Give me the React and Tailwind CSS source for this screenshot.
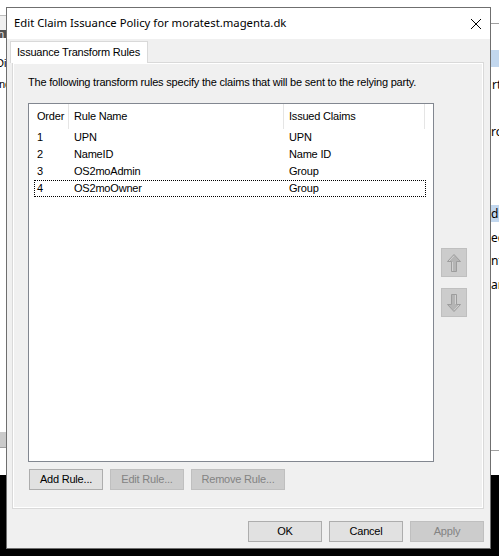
import React from 'react';

// ─── Data ─────────────────────────────────────────────────────────────────────

const rules = [
    { order: 1, name: 'UPN', claims: 'UPN' },
    { order: 2, name: 'NameID', claims: 'Name ID' },
    { order: 3, name: 'OS2moAdmin', claims: 'Group' },
    { order: 4, name: 'OS2moOwner', claims: 'Group', focused: true },
];

const ui = "font-['Liberation_Sans',Arial,sans-serif]";

// ─── Helpers ──────────────────────────────────────────────────────────────────

const WinButton = ({ children, disabled, className = '' }) => (
    <button
        className={`h-[21px] border text-[11px] leading-none tracking-[-0.2px] flex items-center justify-center ${
            disabled
                ? 'bg-[#cccccc] border-[#bfbfbf] text-[#838383]'
                : 'bg-[#e1e1e1] border-[#adadad] text-black'
        } ${className}`}
    >
        {children}
    </button>
);

const ArrowButton = ({ down }) => (
    <div className="w-[26px] h-[29px] bg-[#cccccc] border border-[#bfbfbf] flex items-center justify-center">
        <svg width="14" height="18" viewBox="0 0 14 18" className={down ? 'rotate-180' : ''}>
            <path
                d="M7 0.5 L13.5 7.5 L9.5 7.5 L9.5 17.5 L4.5 17.5 L4.5 7.5 L0.5 7.5 Z"
                fill="#b5b5b5"
                stroke="#9d9d9d"
                strokeWidth="1"
            />
            <path d="M5.5 8 L5.5 17 M2 7 L7 1.8" stroke="#d2d2d2" strokeWidth="1" fill="none" />
        </svg>
    </div>
);

// ─── Background window (pieces visible around the dialog) ─────────────────────

const LeftStrip = () => (
    <div className={`w-[6px] flex flex-col overflow-hidden text-[11px] leading-none ${ui}`}>
        <div className="h-[15px] bg-white" />
        <div className="h-[1px] bg-[#bdbdbd]" />
        <div className="h-[14px] bg-[#f0f0f0]" />
        <div className="h-[8px] bg-[#4f4f4f] text-[#e8e8e8] flex items-center whitespace-nowrap">
            <span className="-ml-[2px]">n</span>
        </div>
        <div className="h-[20px] bg-white" />
        <div className="h-[10px] bg-white whitespace-nowrap flex items-center">
            <span className="-ml-[4px]">Di</span>
        </div>
        <div className="h-[12px] bg-white" />
        <div className="h-[9px] bg-white whitespace-nowrap flex items-center">
            <span className="-ml-[1px]">nd</span>
        </div>
        <div className="flex-1 bg-white" />
        <div className="h-[15px] bg-[#cacaca]" />
        <div className="h-[1px] bg-[#9f9f9f]" />
        <div className="h-[27px] bg-white" />
    </div>
);

const RightStrip = () => (
    <div className="w-[8px] flex flex-col overflow-hidden text-[12px] leading-none whitespace-nowrap font-['Noto_Sans',sans-serif]">
        <div className="h-[23px] bg-white" />
        <div className="h-[1px] bg-[#a0a0a0]" />
        <div className="h-[26px] bg-white" />
        <div className="h-[17px] bg-[#c2d7ee]" />
        <div className="h-[9px] bg-white" />
        <div className="h-[17px] bg-white flex items-center pl-[1px]">rt</div>
        <div className="h-[30px] bg-white" />
        <div className="h-[17px] bg-white flex items-center">ro</div>
        <div className="h-[65px] bg-white" />
        <div className="h-[17px] bg-[#c2d7ee] flex items-center">dk</div>
        <div className="h-[7px] bg-white" />
        <div className="h-[17px] bg-white flex items-center">ed</div>
        <div className="h-[6px] bg-white" />
        <div className="h-[17px] bg-white flex items-center">nt</div>
        <div className="h-[7px] bg-white" />
        <div className="h-[17px] bg-white flex items-center">ar</div>
        <div className="flex-1 bg-white" />
        <div className="h-[1px] bg-[#a0a0a0]" />
        <div className="h-[24px] bg-white" />
    </div>
);

// ─── Componente Principal ─────────────────────────────────────────────────────

const App = () => {
    return (
        <div className="relative w-[499px] h-[556px] overflow-hidden bg-black">
            {/* Janela de fundo */}
            <div className="h-[475px] flex bg-white">
                <LeftStrip />
                <div className="flex-1" />
                <RightStrip />
            </div>

            {/* Dialog */}
            <div className="absolute left-[6px] top-[7px] w-[485px] h-[542px] border border-[#6f6f6f] bg-[#f0f0f0] flex flex-col">
                {/* Title bar */}
                <div className="h-[31px] bg-white flex items-center justify-between pl-[7px] pr-[9px]">
                    <span className="text-[11.3px] text-black font-['Noto_Sans',sans-serif]">
                        Edit Claim Issuance Policy for moratest.magenta.dk
                    </span>
                    <svg width="10" height="10" viewBox="0 0 10 10">
                        <path d="M0 0 L10 10 M10 0 L0 10" stroke="#000" strokeWidth="1" />
                    </svg>
                </div>

                {/* Body */}
                <div className={`flex-1 flex flex-col pt-[2px] pl-[5px] pr-[6px] ${ui} text-[11px] tracking-[-0.2px] text-black`}>
                    {/* Tab */}
                    <div className="relative z-10 ml-[-2px] w-[138px] h-[22px] bg-white border border-b-0 border-[#d9d9d9] flex items-center pl-[6px]">
                        Issuance Transform Rules
                    </div>

                    {/* Tab page */}
                    <div className="-mt-[1px] h-[447px] border border-[#d9d9d9] shadow-[inset_1px_1px_0_#ffffff,inset_-1px_-1px_0_#ffffff] flex flex-col pl-[15px]">
                        <p className="mt-[13px] h-[13px] leading-[13px]">
                            The following transform rules specify the claims that will be sent to the relying party.
                        </p>

                        <div className="mt-[14px] flex items-center">
                            {/* List view */}
                            <div className="w-[406px] h-[359px] border border-[#828790] bg-white flex flex-col">
                                <div className="h-[25px] flex items-center">
                                    <div className="w-[40px] h-full border-r border-[#e5e5e5] flex items-center pl-[8px]">Order</div>
                                    <div className="w-[215px] h-full border-r border-[#e5e5e5] flex items-center pl-[5px]">Rule Name</div>
                                    <div className="w-[141px] h-full border-r border-[#e5e5e5] flex items-center pl-[5px]">Issued Claims</div>
                                </div>
                                {rules.map((rule) => (
                                    <div
                                        key={rule.order}
                                        className={`ml-[5px] w-[392px] h-[17px] flex items-center border border-dotted ${
                                            rule.focused ? 'border-black' : 'border-transparent'
                                        }`}
                                    >
                                        <div className="w-[34px] pl-[2px]">{rule.order}</div>
                                        <div className="w-[215px] pl-[5px]">{rule.name}</div>
                                        <div className="flex-1 pl-[5px]">{rule.claims}</div>
                                    </div>
                                ))}
                            </div>

                            {/* Up / down */}
                            <div className="ml-[7px] flex flex-col gap-[11px]">
                                <ArrowButton />
                                <ArrowButton down />
                            </div>
                        </div>

                        <div className="mt-[7px] ml-[1px] flex gap-[7px]">
                            <WinButton className="w-[74px]">Add Rule...</WinButton>
                            <WinButton disabled className="w-[74px]">Edit Rule...</WinButton>
                            <WinButton disabled className="w-[94px]">Remove Rule...</WinButton>
                        </div>
                    </div>

                    {/* Footer */}
                    <div className="mt-[12px] flex justify-end gap-[7px]">
                        <WinButton className="w-[74px]">OK</WinButton>
                        <WinButton className="w-[74px]">Cancel</WinButton>
                        <WinButton disabled className="w-[74px]">Apply</WinButton>
                    </div>
                </div>
            </div>
        </div>
    );
};

export default App;
